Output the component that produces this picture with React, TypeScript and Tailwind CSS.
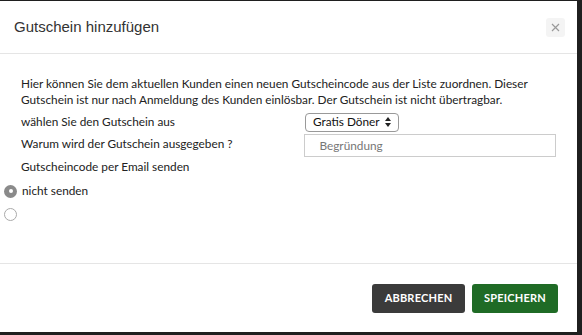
export default function App() {
  return (
    <div className="w-[582px] h-[335px] bg-[#1f1f1f] pt-px overflow-hidden">
      {/* Modal */}
      <div className="w-[577px] h-[331px] bg-white flex flex-col" style={{ fontFamily: "Lato, sans-serif" }}>
        {/* Header */}
        <div className="h-[53px] shrink-0 flex items-center justify-between pl-[14px] pr-[12px] border-b border-[#e5e5e5]">
          <h1 className="text-[15px] text-[#333] font-['Liberation_Sans',Arial,sans-serif]">Gutschein hinzufügen</h1>
          <button className="w-[19px] h-[19px] rounded-[3px] bg-[#f4f4f4] flex items-center justify-center text-[#9a9a9a]">
            <svg width="9" height="9" viewBox="0 0 9 9" stroke="currentColor" strokeWidth="1.2">
              <path d="M1 1 L8 8 M8 1 L1 8" />
            </svg>
          </button>
        </div>
        {/* Body */}
        <div className="flex-1 pt-[22px] text-[11.8px] text-[#222]">
          <p className="pl-[21px] pr-[12px] leading-[16px]">
            Hier können Sie dem aktuellen Kunden einen neuen Gutscheincode aus der Liste zuordnen. Dieser Gutschein ist nur nach Anmeldung des Kunden einlösbar. Der Gutschein ist nicht übertragbar.
          </p>
          <div className="px-[21px] mt-[4px] flex items-center h-[20px]">
            <span className="w-[284px]">wählen Sie den Gutschein aus</span>
            <div className="h-[19px] px-[7px] border border-[#999] rounded-[4px] flex items-center gap-[5px] text-[#111]">
              Gratis Döner
              <svg width="6" height="10" viewBox="0 0 6 10" fill="#222">
                <path d="M3 0 L6 4 L0 4 Z M0 6 L6 6 L3 10 Z" />
              </svg>
            </div>
          </div>
          <div className="px-[21px] mt-[2px] flex items-start h-[23px]">
            <span className="w-[284px] pt-[3px] leading-[14px]">Warum wird der Gutschein ausgegeben ?</span>
            <div className="w-[252px] h-[23px] border border-[#ccc] flex items-center pl-[14px] text-[#777]">
              Begründung
            </div>
          </div>
          <div className="px-[21px] mt-[2px] h-[16px] leading-[16px]">Gutscheincode per Email senden</div>
          <div className="pl-[4px] mt-[5px] h-[22px] flex items-center gap-[5px]">
            <span className="w-[13px] h-[13px] rounded-full bg-[#8a8a8a] flex items-center justify-center">
              <span className="w-[4px] h-[4px] rounded-full bg-white" />
            </span>
            <span>nicht senden</span>
          </div>
          <div className="pl-[4px] mt-px h-[22px] flex items-center">
            <span className="w-[13px] h-[13px] rounded-full border border-[#aaa] bg-white" />
          </div>
        </div>
        {/* Footer */}
        <div className="h-[69px] shrink-0 border-t border-[#e5e5e5] flex items-center justify-end gap-[7px] pr-[19px]">
          <button className="w-[93px] h-[29px] rounded-[3px] bg-[#3b3b3b] text-white text-[11px] font-bold tracking-[0.2px]">ABBRECHEN</button>
          <button className="w-[86px] h-[29px] rounded-[3px] bg-[#1f6b26] text-white text-[11px] font-bold tracking-[0.2px]">SPEICHERN</button>
        </div>
      </div>
    </div>
  );
}
